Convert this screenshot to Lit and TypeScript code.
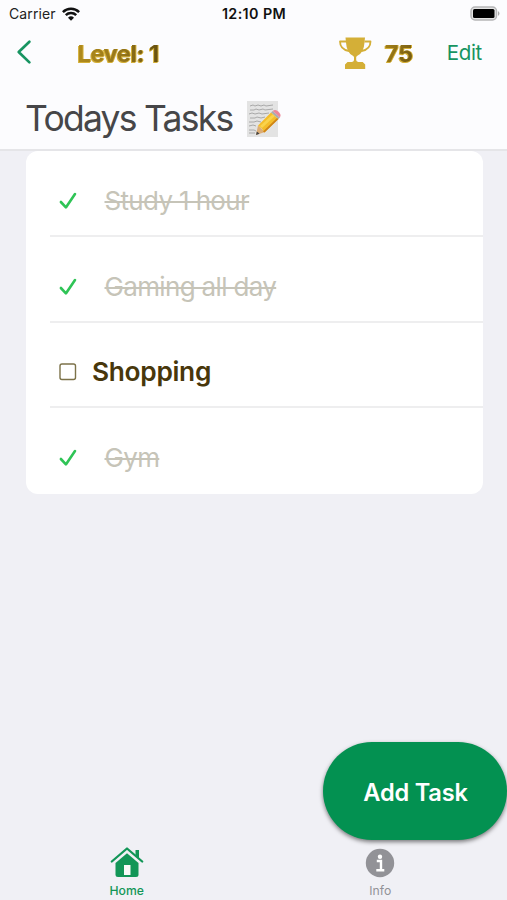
import { LitElement, html, css, svg } from "lit";
import { customElement, property } from "lit/decorators.js";
import { classMap } from "lit/directives/class-map.js";

interface Task {
  name: string;
  done: boolean;
}

@customElement("task-row")
class TaskRow extends LitElement {
  @property({ attribute: false }) task!: Task;

  static styles = css`
    :host { display: block; height: 85.75px; box-sizing: border-box; padding-left: 24px; }
    .line { height: 100%; box-sizing: border-box; border-bottom: 2px solid #eeeeef; padding-top: 16px; display: flex; align-items: center; }
    :host(:last-child) .line { border-bottom-color: transparent; }
    svg { width: 20px; height: 20px; margin-left: 8px; flex: none; }
    .name { font-size: 26.3px; line-height: 34px; white-space: nowrap; color: #48370b; font-weight: 600; letter-spacing: -0.3px; margin-left: 14px; }
    .done .name { font-size: 26px; font-weight: 400; color: #c6c4b8; text-decoration: line-through; text-decoration-thickness: 2px; letter-spacing: -0.66px; margin-left: 26.5px; }
  `;

  render() {
    return html`<div class=${classMap({ line: true, done: this.task.done })}>
      <svg viewBox="0 0 20 20" fill="none">
        ${this.task.done
          ? svg`<path d="M2.900 11 7.900 16.400 17 3" stroke="#2fc456" stroke-width="2.6" stroke-linecap="round" stroke-linejoin="round"/>`
          : svg`<rect x="2" y="2" width="15.500" height="15.500" rx="2" stroke="#7c7249" stroke-width="1.4"/>`}
      </svg>
      <span class="name">${this.task.name}</span>
    </div>`;
  }
}

@customElement("app-root")
class AppRoot extends LitElement {
  private tasks: Task[] = [
    { name: "Study 1 hour", done: true },
    { name: "Gaming all day", done: true },
    { name: "Shopping", done: false },
    { name: "Gym", done: true },
  ];

  static styles = css`
    :host { display: flex; flex-direction: column; width: 507px; height: 900px; overflow: hidden; position: relative; background: #f0f0f5; font-family: Inter, "Liberation Sans", sans-serif; }
    header { height: 149px; flex: none; background: #fcfcfe; border-bottom: 2px solid #e5e5e8; }
    .status { height: 27px; display: grid; grid-template-columns: 1fr auto 1fr; align-items: center; font-size: 14px; color: #222; padding: 0 6px 0 9px; }
    .carrier { display: flex; align-items: center; gap: 6px; letter-spacing: 0.1px; }
    .clock { font-size: 14.3px; font-weight: 600; letter-spacing: 0.4px; color: #111; margin-right: 2px; }
    .battery { justify-self: end; }
    .nav { height: 52px; display: flex; align-items: center; }
    .back { margin-left: 16px; position: relative; top: -1px; }
    .gold { font-size: 23.500px; font-weight: 700; color: transparent; background: linear-gradient(90deg, #b08b1c, #94751b 55%, #66500f); -webkit-background-clip: text; background-clip: text; filter: drop-shadow(-1px 1px 0 #d4af37) drop-shadow(1px 0 0 #d4af37); white-space: nowrap; }
    .level { margin-left: 43.500px; letter-spacing: -0.4px; }
    .trophy { margin-left: auto; }
    .points { margin-left: 13px; letter-spacing: -0.300px; background-image: linear-gradient(115deg, #a98419, #6b5411); }
    .edit { margin: 0 25px 0 34px; color: #179461; font-size: 20.5px; letter-spacing: -0.3px; position: relative; top: -1px; }
    .title { display: flex; align-items: center; height: 79px; padding-left: 25px; }
    h1 { margin: 0; font-weight: 400; font-size: 35.500px; line-height: 44px; letter-spacing: -1.75px; color: #464648; white-space: nowrap; }
    .memo { margin-left: 14px; }
    .card { margin: 0 24.500px 0 26px; background: #fff; border-radius: 12px; height: 343px; flex: none; }
    svg { display: block; flex: none; }
    .tabs { margin-top: auto; display: flex; }
    .tab { flex: 1; display: flex; flex-direction: column; align-items: center; height: 55px; font-size: 12.2px; color: #929297; }
    .tab span { line-height: 16px; margin-top: 4px; }
    .active { color: #129657; font-weight: 500; }
    .add { position: absolute; left: 323px; top: 742px; width: 184px; height: 98px; border: 0; border-radius: 49px; background: #039151; color: #fff; font: 600 23.600px Inter, sans-serif; letter-spacing: -0.2px; padding: 2px 0 0 1px; box-shadow: 0 2px 4px rgba(0, 0, 0, 0.5); }
  `;

  render() {
    return html`
      <header>
        <div class="status">
          <div class="carrier">
            <span>Carrier</span>
            <svg width="18" height="14" viewBox="0 0 18 14" fill="none" stroke="#111" stroke-width="2.5">
              <path d="M.9 5.1a11.5 11.5 0 0 1 16.2 0M3.8 8.1a7.4 7.4 0 0 1 10.4 0"/>
              <path d="M9 13.8 6 10.8a4.3 4.3 0 0 1 6 0z" fill="#111" stroke="none"/>
            </svg>
          </div>
          <span class="clock">12:10 PM</span>
          <svg class="battery" width="31" height="15" viewBox="0 0 31 15">
            <rect x="1" y="1" width="25.500" height="13" rx="4" fill="#e4e4e4" stroke="#b5b5b7" stroke-width="1.500"/>
            <rect x="3" y="3" width="21.500" height="9" rx="1.500" fill="#000"/>
            <path d="M28 5q3 2.5 0 5z" fill="#aaa"/>
          </svg>
        </div>
        <div class="nav">
          <svg class="back" width="18" height="26" viewBox="0 0 18 26" fill="none" stroke="#179461" stroke-width="2.7" stroke-linecap="round" stroke-linejoin="round"><path d="M13.4 2.8 2.7 13l10.7 10.4"/></svg>
          <span class="gold level">Level: 1</span>
          <svg class="trophy" width="34" height="33" viewBox="0 0 34 33">
            <path fill="#d4af37" d="M7.500.5h19.500l-.5 5q-.6 10.500-7.500 13.500l-.8 1v3q0 1.500 2 2h4.500l2.500 2.500v4.500H7v-4.500L9.500 25H14q2-.5 2-2v-3l-.8-1Q8.600 16 8 5.500z"/>
            <path fill="none" stroke="#d4af37" stroke-width="1.8" stroke-linejoin="round" d="M8 4.500H2q0 8 9 9.500M26.500 4.500h6q0 8-9 9.500"/>
          </svg>
          <span class="gold points">75</span>
          <span class="edit">Edit</span>
        </div>
        <div class="title">
          <h1>Todays Tasks</h1>
          <svg class="memo" width="36" height="38" viewBox="0 0 36 38">
            <rect x="1" y="1" width="31" height="36" fill="#e3e3e3"/>
            <g fill="none" stroke="#999" stroke-width=".8">
              <path d="M4 6l3-1 2 1 3-1 3 1 3-1 2 1 7-1" /><path d="M4 10h4l2-1 3 1 4-1 2 1 8-1"/><path d="M3 14l3-1 3 1 4-1 3 1 7-1"/><path d="M4 18h5l2-1 4 1 4-1M3 22h5l3-1 4 1M3 26l4-1 3 1M3 30h5l2 1M3 33h6"/>
            </g>
            <path d="M10 35l2-9.500 7 6.500z" fill="#dcad76"/>
            <path d="M10 35l.8-3.6 2.800 2.400z" fill="#444"/>
            <path d="M12 25.500 25 12.500l7.500 6.500L18.500 32.500q-2-4-6.500-7z" fill="#f4bd2b"/>
            <path d="M14 26 27 14l2 2-13 12z" fill="#fad34c"/>
            <path d="M17 31.500 31 18l1.500 1-14 13.500z" fill="#ce8318"/>
            <path d="M25 12.500l1.8-1.500 7.200 6.400-1.500 1.600z" fill="#a9adb0"/>
            <path d="M26.8 11q2-2 5 .2 4 3 2.200 6.200z" fill="#ee8698"/>
          </svg>
        </div>
      </header>
      <main class="card">
        ${this.tasks.map((t) => html`<task-row .task=${t}></task-row>`)}
      </main>
      <nav class="tabs">
        <div class="tab active">
          <svg width="34" height="34" viewBox="0 0 34 34">
            <path fill="#129657" d="M5.500 18 17 8.200 28.500 18v11.500q0 2.500-2.500 2.500H8q-2.500 0-2.500-2.500z"/>
            <path fill="#129657" d="M25.500 5H29v8.500l-3.500-3z"/>
            <path d="M1.800 16.500 17 3.500 32.200 16.500" fill="none" stroke="#129657" stroke-width="2.300" stroke-linecap="round" stroke-linejoin="round"/>
            <rect x="14" y="20" width="6.500" height="10" fill="#f8faf8"/>
          </svg>
          <span>Home</span>
        </div>
        <div class="tab">
          <svg width="34" height="34" viewBox="0 0 34 34">
            <circle cx="17" cy="18" r="14.200" fill="#929297"/>
            <circle cx="17" cy="11.700" r="2.200" fill="#fff"/>
            <path d="M13.800 16H18V25M13.300 25.200h8" fill="none" stroke="#fff" stroke-width="2.400"/>
          </svg>
          <span>Info</span>
        </div>
      </nav>
      <button class="add">Add Task</button>
    `;
  }
}
